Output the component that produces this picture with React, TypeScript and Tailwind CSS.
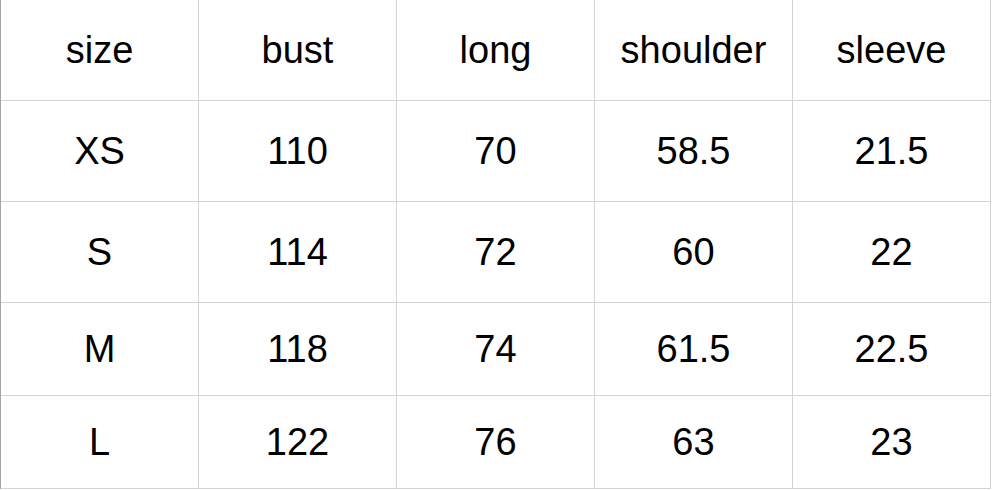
import React from 'react';

const headers = ['size', 'bust', 'long', 'shoulder', 'sleeve'];

const rows = [
  { cells: ['XS', '110', '70', '58.5', '21.5'], height: 'h-[101px]' },
  { cells: ['S', '114', '72', '60', '22'], height: 'h-[101px]' },
  { cells: ['M', '118', '74', '61.5', '22.5'], height: 'h-[93px]' },
  { cells: ['L', '122', '76', '63', '23'], height: 'h-[93px]' },
];

function Row({ cells, height }: { cells: string[]; height: string }) {
  return (
    <div className={`grid grid-cols-[198px_198px_198px_198px_198px] ${height}`}>
      {cells.map((c, i) => (
        <div
          key={i}
          className="flex items-center justify-center border-r border-b border-[#d4d4d4] text-[38px] text-black"
        >
          {c}
        </div>
      ))}
    </div>
  );
}

export default function App() {
  return (
    <div
      className="w-[992px] h-[490px] bg-white"
      style={{ fontFamily: '"Liberation Sans", Arial, sans-serif' }}
    >
      <div className="w-[991px] border-l border-[#a6a6a6]">
        <Row cells={headers} height="h-[101px]" />
        {rows.map((r, i) => (
          <Row key={i} cells={r.cells} height={r.height} />
        ))}
      </div>
    </div>
  );
}
